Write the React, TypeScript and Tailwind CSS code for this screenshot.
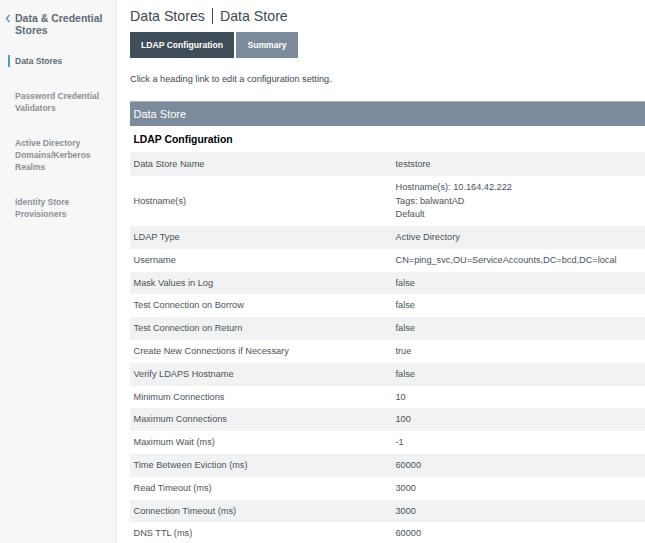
const rows: [string, string][] = [
  ['LDAP Type', 'Active Directory'],
  ['Username', 'CN=ping_svc,OU=ServiceAccounts,DC=bcd,DC=local'],
  ['Mask Values in Log', 'false'],
  ['Test Connection on Borrow', 'false'],
  ['Test Connection on Return', 'false'],
  ['Create New Connections if Necessary', 'true'],
  ['Verify LDAPS Hostname', 'false'],
  ['Minimum Connections', '10'],
  ['Maximum Connections', '100'],
  ['Maximum Wait (ms)', '-1'],
  ['Time Between Eviction (ms)', '60000'],
  ['Read Timeout (ms)', '3000'],
  ['Connection Timeout (ms)', '3000'],
  ['DNS TTL (ms)', '60000'],
];

const navItems = [
  'Password Credential Validators',
  'Active Directory Domains/Kerberos Realms',
  'Identity Store Provisioners',
];

export default function App() {
  return (
    <div className="flex h-[543px] w-[645px] overflow-hidden bg-white font-['Liberation_Sans',Arial,sans-serif]">
      <aside className="w-[117px] shrink-0 border-r border-[#e6e8ea] bg-[#f7f7f7] pt-[12px]">
        <div className="flex">
          <svg className="ml-[5px] mt-[2px] h-[9px] w-[6px] shrink-0" viewBox="0 0 6 9" fill="none">
            <path d="M4.5 1 L1.5 4.5 L4.5 8" stroke="#4a9cc4" strokeWidth="1.4" />
          </svg>
          <div className="ml-[4px] w-[100px] text-[10.5px] font-bold leading-[12px] text-[#5f6b76]">
            Data &amp; Credential Stores
          </div>
        </div>
        <div className="mt-[19px] ml-[8px] border-l-2 border-[#4a9cc4] pl-[5px] text-[8.5px] font-bold leading-[12px] text-[#5f6b76]">
          Data Stores
        </div>
        {navItems.map((label) => (
          <div key={label} className="mt-[23px] ml-[15px] w-[96px] text-[8.5px] font-bold leading-[12px] text-[#8a9199]">
            {label}
          </div>
        ))}
      </aside>

      <main className="min-w-0 flex-1 pl-[13px] pt-[5px]">
        <h1 className="flex items-center text-[14.2px] leading-[22px] text-[#3d4852]">
          Data Stores
          <span className="mx-[7px] h-[16px] w-px bg-[#3d4852]" />
          Data Store
        </h1>
        <div className="mt-[5px] flex h-[26px] text-[8.6px] font-bold text-white">
          <div className="flex w-[104px] items-center justify-center bg-[#3f4e59]">LDAP Configuration</div>
          <div className="ml-[2px] flex w-[62px] items-center justify-center bg-[#7b8b9c]">Summary</div>
        </div>
        <p className="mt-[15px] text-[9.2px] leading-[12px] text-[#3d4852]">Click a heading link to edit a configuration setting.</p>
        <div className="mt-[16px] flex h-[25px] items-center border-t border-[#a9b4bf] bg-[#7b8b9c] pl-[3.5px] text-[11px] text-white">
          Data Store
        </div>
        <div className="flex h-[26px] items-center pl-[3.5px] pt-[2px] text-[10.4px] font-bold text-black">LDAP Configuration</div>
        <div className="text-[9.2px] text-[#4a525a]">
          <div className="flex h-[24px] items-center bg-[#f1f2f3] pl-[3.5px] pt-[1px]">
            <div className="w-[262px]">Data Store Name</div>
            <div>teststore</div>
          </div>
          <div className="flex h-[50px] items-center pl-[3.5px] pt-[1px]">
            <div className="w-[262px]">Hostname(s)</div>
            <div className="leading-[13.5px]">
              <div>Hostname(s): 10.164.42.222</div>
              <div>Tags: balwantAD</div>
              <div>Default</div>
            </div>
          </div>
          {rows.map(([label, value], i) => (
            <div key={label} className={`flex h-[22.8px] items-center pl-[3.5px] pt-[1px] ${i % 2 === 0 ? 'bg-[#f1f2f3]' : ''}`}>
              <div className="w-[262px]">{label}</div>
              <div>{value}</div>
            </div>
          ))}
        </div>
      </main>
    </div>
  );
}
